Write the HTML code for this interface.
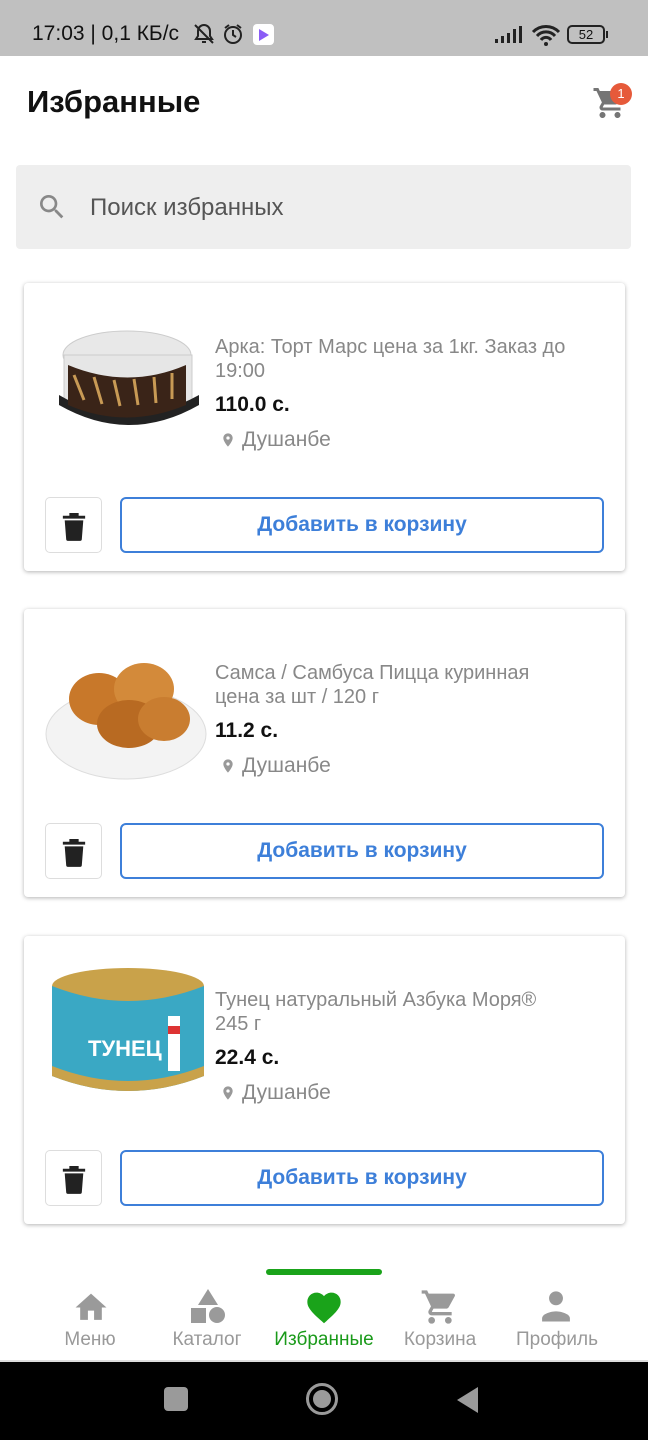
<!DOCTYPE html>
<html><head><meta charset="utf-8"><style>
*{margin:0;padding:0;box-sizing:border-box}
body{width:648px;height:1440px;background:#fff;font-family:"Liberation Sans","DejaVu Sans",sans-serif;position:relative;overflow:hidden}
.abs{position:absolute}
.sb{left:0;top:0;width:648px;height:56px;background:#c0c0c0;font-size:21px;color:#111}
.card{left:24px;width:601px;height:288px;background:#fff;border-radius:4px;box-shadow:0 1px 4px rgba(0,0,0,.3)}
.t{left:191px;width:355px;font-size:20px;color:#888;line-height:24px}
.p{left:191px;font-size:21px;font-weight:bold;color:#111}
.loc{left:218px;font-size:21px;color:#888}
.pin{left:196px}
.tr{left:21px;width:57px;height:56px;border:1px solid #ddd;border-radius:5px}
.add{left:96px;width:484px;height:56px;border:2px solid #3d7fd9;border-radius:6px;color:#3d7fd9;font-weight:bold;font-size:21px;text-align:center;line-height:52px}
.nav{font-size:19px;color:#999;text-align:center;width:120px;top:1329px}
</style></head><body>
<div class="abs sb">
<div class="abs" style="left:32px;top:22px">17:03 | 0,1 КБ/с</div>
<svg class="abs" style="left:192px;top:22px" width="24" height="24" viewBox="0 0 24 24"><path d="M12 3a6 6 0 0 0-6 6v5l-2 3h16l-2-3V9a6 6 0 0 0-6-6zM10 20h4M3 3l18 18" stroke="#222" stroke-width="2" fill="none"/></svg>
<svg class="abs" style="left:222px;top:23px" width="22" height="22"><circle cx="11" cy="12" r="8" fill="none" stroke="#222" stroke-width="2"/><path d="M11 7v5l3 2M3 5l4-3M19 5l-4-3" stroke="#222" stroke-width="2" fill="none"/></svg>
<div class="abs" style="left:253px;top:24px;width:21px;height:21px;background:#fff;border-radius:4px"></div>
<svg class="abs" style="left:258px;top:28px" width="12" height="13"><path d="M1 1l10 6-10 6z" fill="#8a5cf6"/></svg>
<svg class="abs" style="left:495px;top:26px" width="28" height="18"><rect x="0" y="13" width="3" height="4" fill="#222"/><rect x="6" y="10" width="3" height="7" fill="#222"/><rect x="12" y="7" width="3" height="10" fill="#222"/><rect x="18" y="3" width="3" height="14" fill="#222"/><rect x="24" y="0" width="3" height="17" fill="#222"/></svg>
<svg class="abs" style="left:531px;top:24px" width="30" height="22"><path d="M2 8a18 18 0 0 1 26 0M6 12a12 12 0 0 1 18 0M10 16a6 6 0 0 1 10 0" stroke="#222" stroke-width="3" fill="none"/><circle cx="15" cy="20" r="2" fill="#222"/></svg>
<div class="abs" style="left:567px;top:25px;width:38px;height:19px;border:2px solid #222;border-radius:5px;font-size:13px;text-align:center;line-height:15px">52</div>
<div class="abs" style="left:606px;top:31px;width:2px;height:7px;background:#222"></div>
</div>
<div class="abs" style="left:27px;top:84px;font-size:31px;font-weight:bold;color:#111">Избранные</div>
<svg class="abs" style="left:592px;top:85px" width="36" height="36" viewBox="0 0 24 24"><path fill="#757575" d="M7 18c-1.1 0-2 .9-2 2s.9 2 2 2 2-.9 2-2-.9-2-2-2zM1 2v2h2l3.6 7.59-1.35 2.45c-.16.28-.25.61-.25.96 0 1.1.9 2 2 2h12v-2H7.42c-.14 0-.25-.11-.25-.25l.03-.12.9-1.63h7.45c.75 0 1.41-.41 1.75-1.03l3.58-6.49A1 1 0 0 0 20 4H5.21l-.94-2H1zm16 16c-1.1 0-2 .9-2 2s.9 2 2 2 2-.9 2-2-.9-2-2-2z"/></svg>
<div class="abs" style="left:610px;top:83px;width:22px;height:22px;border-radius:50%;background:#e65a3a;color:#fff;font-size:13px;text-align:center;line-height:22px">1</div>
<div class="abs" style="left:16px;top:165px;width:615px;height:84px;background:#eee;border-radius:4px"></div>
<svg class="abs" style="left:36px;top:191px" width="32" height="32" viewBox="0 0 24 24"><path fill="#888" d="M15.5 14h-.79l-.28-.27A6.47 6.47 0 0 0 16 9.5 6.5 6.5 0 1 0 9.5 16c1.61 0 3.09-.59 4.23-1.57l.27.28v.79l5 4.99L20.49 19l-4.99-5zm-6 0C7.01 14 5 11.99 5 9.5S7.01 5 9.5 5 14 7.01 14 9.5 11.99 14 9.5 14z"/></svg>
<div class="abs" style="left:90px;top:194px;font-size:24px;color:#555">Поиск избранных</div>

<!-- card1 -->
<div class="abs card" style="top:283px">
<svg class="abs" style="left:30px;top:32px" width="150" height="135"><ellipse cx="73" cy="40" rx="64" ry="24" fill="#e8e8e8" stroke="#ccc"/><path d="M10 40v45q63 30 128 0V40z" fill="#e6e6e6" stroke="#ccc"/><path d="M5 80q68 40 140 0v10q-70 40-140 0z" fill="#222"/><path d="M14 50q60 25 118 0v40q-60 25-118 0z" fill="#3a2418"/><path d="M20 60l10 25M40 62l8 27M60 65l6 26M80 64l4 26M100 62l2 26M118 58l0 26" stroke="#c89a55" stroke-width="3"/></svg>
<div class="abs t" style="top:52px">Арка: Торт Марс цена за 1кг. Заказ до 19:00</div>
<div class="abs p" style="top:110px">110.0 с.</div>
<svg class="abs pin" style="top:146px" width="16" height="22" viewBox="0 0 24 24"><path fill="#999" d="M12 2C8.13 2 5 5.13 5 9c0 5.25 7 13 7 13s7-7.75 7-13c0-3.87-3.13-7-7-7zm0 9.5a2.5 2.5 0 0 1 0-5 2.5 2.5 0 0 1 0 5z"/></svg>
<div class="abs loc" style="top:145px">Душанбе</div>
<div class="abs tr" style="top:214px"><svg class="abs" style="left:15px;top:13px" width="26" height="30" viewBox="0 0 14 16"><path fill="#222" d="M1 2.5h12V4H1zM4.5 1h5v1.5h-5zM2 5h10l-.8 10.2q-.1.8-.9.8H3.7q-.8 0-.9-.8z"/></svg></div>
<div class="abs add" style="top:214px">Добавить в корзину</div>
</div>

<!-- card2 -->
<div class="abs card" style="top:609px">
<svg class="abs" style="left:20px;top:30px" width="165" height="145"><ellipse cx="82" cy="95" rx="80" ry="45" fill="#f3f3f3" stroke="#ddd"/><ellipse cx="55" cy="60" rx="30" ry="26" fill="#c8782a"/><ellipse cx="100" cy="50" rx="30" ry="26" fill="#d38a3a"/><ellipse cx="85" cy="85" rx="32" ry="24" fill="#b86a22"/><ellipse cx="120" cy="80" rx="26" ry="22" fill="#c97d30"/></svg>
<div class="abs t" style="top:52px">Самса / Самбуса Пицца куринная цена за шт / 120 г</div>
<div class="abs p" style="top:110px">11.2 с.</div>
<svg class="abs pin" style="top:146px" width="16" height="22" viewBox="0 0 24 24"><path fill="#999" d="M12 2C8.13 2 5 5.13 5 9c0 5.25 7 13 7 13s7-7.75 7-13c0-3.87-3.13-7-7-7zm0 9.5a2.5 2.5 0 0 1 0-5 2.5 2.5 0 0 1 0 5z"/></svg>
<div class="abs loc" style="top:145px">Душанбе</div>
<div class="abs tr" style="top:214px"><svg class="abs" style="left:15px;top:13px" width="26" height="30" viewBox="0 0 14 16"><path fill="#222" d="M1 2.5h12V4H1zM4.5 1h5v1.5h-5zM2 5h10l-.8 10.2q-.1.8-.9.8H3.7q-.8 0-.9-.8z"/></svg></div>
<div class="abs add" style="top:214px">Добавить в корзину</div>
</div>

<!-- card3 -->
<div class="abs card" style="top:936px">
<svg class="abs" style="left:24px;top:30px" width="160" height="135"><ellipse cx="80" cy="20" rx="76" ry="18" fill="#c9a24a"/><path d="M4 20v90q76 30 152 0V20q-76 30-152 0z" fill="#3aa8c4"/><path d="M4 100q76 30 152 0v10q-76 30-152 0z" fill="#c9a24a"/><text x="40" y="90" font-family="Liberation Sans" font-weight="bold" font-size="22" fill="#fff">ТУНЕЦ</text><rect x="120" y="50" width="12" height="55" fill="#fff"/><rect x="120" y="60" width="12" height="8" fill="#d33"/></svg>
<div class="abs t" style="top:52px">Тунец натуральный Азбука Моря® 245 г</div>
<div class="abs p" style="top:110px">22.4 с.</div>
<svg class="abs pin" style="top:146px" width="16" height="22" viewBox="0 0 24 24"><path fill="#999" d="M12 2C8.13 2 5 5.13 5 9c0 5.25 7 13 7 13s7-7.75 7-13c0-3.87-3.13-7-7-7zm0 9.5a2.5 2.5 0 0 1 0-5 2.5 2.5 0 0 1 0 5z"/></svg>
<div class="abs loc" style="top:145px">Душанбе</div>
<div class="abs tr" style="top:214px"><svg class="abs" style="left:15px;top:13px" width="26" height="30" viewBox="0 0 14 16"><path fill="#222" d="M1 2.5h12V4H1zM4.5 1h5v1.5h-5zM2 5h10l-.8 10.2q-.1.8-.9.8H3.7q-.8 0-.9-.8z"/></svg></div>
<div class="abs add" style="top:214px">Добавить в корзину</div>
</div>

<!-- bottom nav -->
<div class="abs" style="left:266px;top:1269px;width:116px;height:6px;background:#1aa31a;border-radius:3px"></div>
<svg class="abs" style="left:72px;top:1289px" width="38" height="34" viewBox="0 0 24 22"><path fill="#9a9a9a" d="M10 20v-6h4v6h5v-8h3L12 3 2 12h3v8z"/></svg>
<svg class="abs" style="left:189px;top:1288px" width="38" height="36" viewBox="0 0 38 36"><path fill="#9a9a9a" d="M19 1l10 16H9z"/><rect x="2" y="20" width="15" height="15" fill="#9a9a9a"/><circle cx="28" cy="27" r="8" fill="#9a9a9a"/></svg>
<svg class="abs" style="left:304px;top:1287px" width="40" height="38" viewBox="0 0 24 22"><path fill="#1aa31a" d="M12 21.35l-1.45-1.32C5.4 15.36 2 12.28 2 8.5 2 5.42 4.42 3 7.5 3c1.740 0 3.41.81 4.5 2.09C13.09 3.81 14.76 3 16.5 3 19.58 3 22 5.42 22 8.5c0 3.78-3.4 6.86-8.55 11.54z"/></svg>
<svg class="abs" style="left:420px;top:1287px" width="40" height="40" viewBox="0 0 24 24"><path fill="#9a9a9a" d="M7 18c-1.1 0-2 .9-2 2s.9 2 2 2 2-.9 2-2-.9-2-2-2zM1 2v2h2l3.6 7.59-1.35 2.45c-.16.28-.25.61-.25.96 0 1.1.9 2 2 2h12v-2H7.42c-.14 0-.25-.11-.25-.25l.03-.12.9-1.63h7.45c.75 0 1.41-.41 1.750-1.03l3.58-6.49A1 1 0 0 0 20 4H5.21l-.94-2H1zm16 16c-1.1 0-2 .9-2 2s.9 2 2 2 2-.9 2-2-.9-2-2-2z"/></svg>
<svg class="abs" style="left:537px;top:1289px" width="38" height="34" viewBox="0 0 24 22"><circle cx="12" cy="6" r="4.5" fill="#9a9a9a"/><path fill="#9a9a9a" d="M3 21v-2c0-3 6-4.5 9-4.5s9 1.5 9 4.5v2z"/></svg>
<div class="abs nav" style="left:30px">Меню</div>
<div class="abs nav" style="left:147px">Каталог</div>
<div class="abs nav" style="left:264px;color:#1a9a1a">Избранные</div>
<div class="abs nav" style="left:380px">Корзина</div>
<div class="abs nav" style="left:497px">Профиль</div>
<div class="abs" style="left:0;top:1360px;width:648px;height:2px;background:#ddd"></div>
<div class="abs" style="left:0;top:1362px;width:648px;height:78px;background:#000"></div>
<div class="abs" style="left:164px;top:1387px;width:24px;height:24px;background:#9a9a9a;border-radius:4px"></div>
<div class="abs" style="left:306px;top:1383px;width:32px;height:32px;border:3px solid #9a9a9a;border-radius:50%"></div>
<div class="abs" style="left:313px;top:1390px;width:18px;height:18px;background:#9a9a9a;border-radius:50%"></div>
<svg class="abs" style="left:456px;top:1386px" width="24" height="28"><path d="M22 1v26L1 14z" fill="#9a9a9a"/></svg>
</body></html>
